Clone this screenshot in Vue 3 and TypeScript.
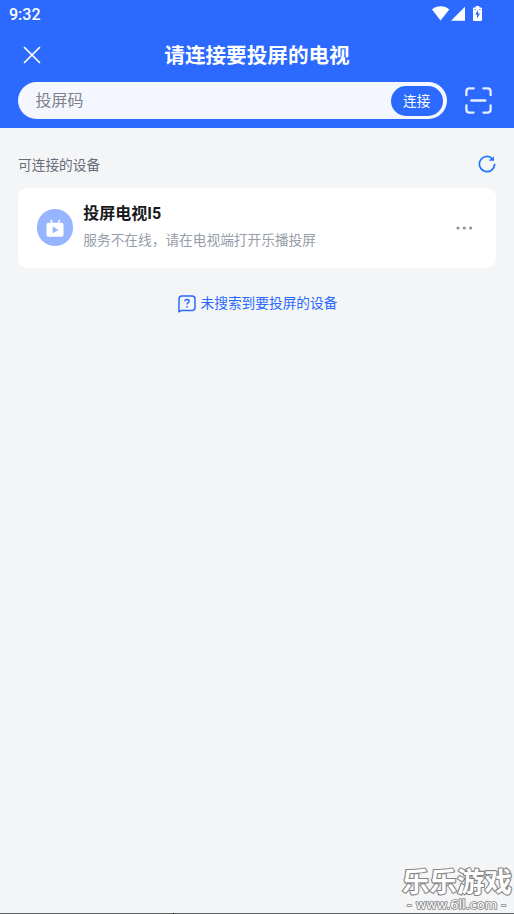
<script setup lang="ts">
import { ref } from 'vue'

interface Device {
  name: string
  status: string
}

const code = ref('')
const devices = ref<Device[]>([
  { name: '投屏电视I5', status: '服务不在线，请在电视端打开乐播投屏' },
])
</script>

<template>
  <div class="screen">
    <header class="top">
      <div class="status-bar">
        <span class="clock">9:32</span>
        <div class="status-icons">
          <svg class="wifi" width="18" height="15" viewBox="0 0 18 15">
            <path d="M0 3.4C5 -.8 12.5 -.8 17.3 3.4L8.6 14.6Z" fill="#fff" />
          </svg>
          <svg class="signal" width="15" height="15" viewBox="0 0 15 15">
            <path d="M14 .8V14.8H0Z" fill="#fff" />
          </svg>
          <svg class="battery" width="9" height="15" viewBox="0 0 9 15">
            <path d="M2.6 0H6.4V1.5H8Q9 1.5 9 2.5V14Q9 15 8 15H1Q0 15 0 14V2.5Q0 1.5 1 1.5H2.6Z" fill="#fff" />
            <path d="M5 4L2.1 8.6H4V12.4L7 7.5H5Z" fill="#2b69ff" />
            <path d="M1.3 3.6H3M6 3.6H7.7" stroke="#2b69ff" stroke-width=".8" />
          </svg>
        </div>
      </div>
      <div class="title-bar">
        <button class="close" aria-label="关闭">
          <svg width="18" height="18" viewBox="0 0 18 18">
            <path d="M1.5 1.5L16.5 16.5M16.5 1.5L1.5 16.5" stroke="#fff" stroke-width="1.7" stroke-linecap="round" />
          </svg>
        </button>
        <h1>请连接要投屏的电视</h1>
      </div>
      <div class="connect-row">
        <div class="field">
          <input v-model="code" type="text" placeholder="投屏码" />
          <button class="connect">连接</button>
        </div>
        <svg class="scan" width="27" height="27" viewBox="0 0 27 27" fill="none" stroke="#e6edff" stroke-width="2.3" stroke-linecap="round">
          <path d="M1.4 8.2V4.4Q1.4 1.4 4.4 1.4H8.6M18.4 1.4H22.6Q25.6 1.4 25.6 4.4V8.2M25.6 18.3V22.6Q25.6 25.6 22.6 25.6H18.4M8.6 25.6H4.4Q1.4 25.6 1.4 22.6V18.3M6.2 13.5H20.4" />
        </svg>
      </div>
    </header>

    <main>
      <div class="section-head">
        <h2>可连接的设备</h2>
        <svg class="refresh" width="18" height="18" viewBox="0 0 18 18">
          <path d="M14.6 3.9A7.6 7.6 0 1 0 16.6 8.8" fill="none" stroke="#2078ff" stroke-width="1.7" />
          <path d="M16 1.2V5.8H11.4V4.4L14.2 3.4Z" fill="#2078ff" />
        </svg>
      </div>

      <article v-for="device in devices" :key="device.name" class="device">
        <div class="avatar">
          <svg width="18" height="18" viewBox="0 0 18 18">
            <path d="M5 1.2L6.3 4.5M13.4 1.2L12 4.5" stroke="#fff" stroke-width="1.5" stroke-linecap="round" />
            <rect x=".5" y="3.7" width="17" height="14" rx="2" fill="#fff" />
            <path d="M7 8V13.8L12 10.9Z" fill="#96b4ff" stroke="#96b4ff" stroke-width=".6" stroke-linejoin="round" />
          </svg>
        </div>
        <div class="info">
          <h3>{{ device.name }}</h3>
          <p>{{ device.status }}</p>
        </div>
        <button class="more" aria-label="更多">
          <svg width="17" height="4" viewBox="0 0 17 4" fill="#949494">
            <circle cx="2" cy="2" r="1.6" /><circle cx="8.3" cy="2" r="1.6" /><circle cx="14.6" cy="2" r="1.6" />
          </svg>
        </button>
      </article>

      <a class="help">
        <svg width="18" height="18" viewBox="0 0 18 18" fill="none" stroke="#2b69ff" stroke-linejoin="round">
          <path d="M1 16.8V4Q1 1 4 1H14Q17 1 17 4V12.4Q17 15.4 14 15.4H3.6Z" stroke-width="1.5" />
          <path d="M6.9 6.3Q7 4.5 9 4.5Q11.1 4.5 11.1 6.2Q11.1 7.2 10 7.9Q9.1 8.5 9.1 9.5M9.1 11V12.4" stroke-width="1.5" />
        </svg>
        <span>未搜索到要投屏的设备</span>
      </a>
    </main>

    <footer class="edge"><i /></footer>
    <div class="watermark">
      <svg width="114" height="52" viewBox="0 0 114 52">
        <g fill="#fff" stroke="#858585" stroke-linejoin="round" paint-order="stroke">
          <text class="brand" x="2" y="31" textLength="110" lengthAdjust="spacingAndGlyphs" stroke-width="2.2">乐乐游戏</text>
          <text class="site" x="7" y="48" textLength="99" lengthAdjust="spacingAndGlyphs" stroke-width="1.6">- www.6ll.com -</text>
        </g>
      </svg>
    </div>
  </div>
</template>

<style>
body {
  margin: 0;
  background: #f3f5f7;
}
</style>

<style scoped>
.screen {
  position: relative;
  display: flex;
  flex-direction: column;
  height: 914px;
  overflow: hidden;
  background: #f3f5f7;
  font-family: Roboto, 'Noto Sans CJK SC', sans-serif;
}
h1, h2, h3, p {
  margin: 0;
}
button {
  border: 0;
  padding: 0;
  background: none;
  font-family: inherit;
}
svg {
  display: block;
  flex: none;
}
.top {
  box-sizing: border-box;
  height: 128px;
  background: #2b69ff;
  color: #fff;
}
.status-bar {
  display: flex;
  justify-content: space-between;
  height: 28px;
  padding: 0 32px 0 9px;
}
.clock {
  font-size: 16px;
  font-weight: 500;
  line-height: 29px;
}
.status-icons {
  display: flex;
  padding-top: 6px;
}
.signal {
  margin-left: 1px;
}
.battery {
  margin-left: 7px;
}
.title-bar {
  display: grid;
  grid-template-columns: 64px 1fr 64px;
  align-items: center;
  height: 54px;
}
.close {
  display: flex;
  padding-left: 23px;
}
h1 {
  padding-top: 2px;
  text-align: center;
  font-size: 20.6px;
  font-weight: 700;
  line-height: 30px;
}
.connect-row {
  display: flex;
  align-items: center;
  gap: 18px;
  padding: 0 22px 0 18px;
}
.field {
  box-sizing: border-box;
  display: flex;
  align-items: center;
  width: 429px;
  height: 37px;
  padding: 0 4px 0 17.5px;
  border-radius: 19px;
  background: #f4f7ff;
}
input {
  flex: 1;
  min-width: 0;
  padding: 1px 0 0;
  border: 0;
  outline: 0;
  background: none;
  font: 16px/24px Roboto, 'Noto Sans CJK SC', sans-serif;
}
input::placeholder {
  color: #7f8187;
}
.connect {
  width: 52.5px;
  height: 30px;
  padding-bottom: 2px;
  border-radius: 15px;
  background: #2b69ff;
  color: #fff;
  font-size: 13.7px;
}
main {
  flex: 1;
  padding: 0 18px;
}
.section-head {
  display: flex;
  align-items: center;
  justify-content: space-between;
  height: 60px;
}
h2 {
  padding-top: 14px;
  color: #686e79;
  font-size: 13.7px;
  font-weight: 400;
  line-height: 20px;
}
.refresh {
  margin-top: 12px;
}
.device {
  box-sizing: border-box;
  display: flex;
  align-items: center;
  height: 80px;
  padding: 0 23px 0 18.5px;
  border-radius: 9px;
  background: #fff;
}
.avatar {
  display: flex;
  align-items: center;
  justify-content: center;
  width: 36.5px;
  height: 36.5px;
  margin-top: -1px;
  border-radius: 50%;
  background: #96b4ff;
}
.info {
  flex: 1;
  padding: 0 0 4px 10.3px;
}
h3 {
  color: #191a1d;
  font-size: 16px;
  font-weight: 700;
  line-height: 24px;
}
p {
  margin-top: 4px;
  color: #979da9;
  font-size: 13.7px;
  line-height: 20px;
}
.more {
  display: flex;
}
.help {
  display: flex;
  align-items: center;
  justify-content: center;
  gap: 5px;
  padding: 25px 0 0 1px;
  color: #2b69ff;
  font-size: 13.7px;
  line-height: 20px;
}
.help svg {
  margin-top: 1px;
}
.edge {
  display: flex;
  height: 1px;
  background: #646567;
}
.edge i {
  width: 1px;
  margin-left: 173px;
  background: #111;
}
.watermark {
  position: absolute;
  right: 0;
  bottom: 1px;
}
.brand {
  font: 700 27px 'Noto Sans CJK SC', sans-serif;
}
.site {
  font: 400 11.5px 'DejaVu Sans', sans-serif;
}
</style>
